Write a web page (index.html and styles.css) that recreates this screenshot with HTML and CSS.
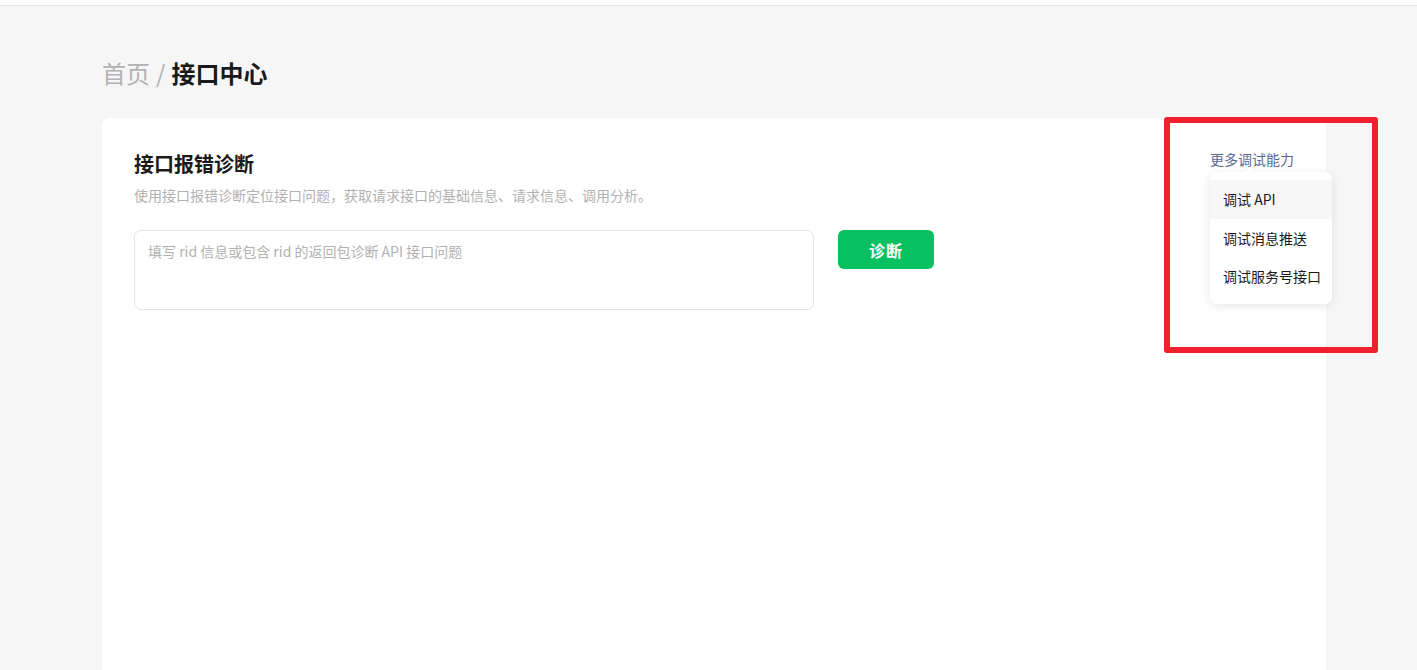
FILE: index.html
```html
<!DOCTYPE html>
<html lang="zh-CN">
<head>
<meta charset="utf-8">
<title>接口中心</title>
<link rel="stylesheet" href="styles.css">
</head>
<body>
<header class="topbar"></header>
<main class="page">
  <nav class="crumbs"><span class="crumb-home">首页</span><span class="crumb-sep">/</span><span class="crumb-current">接口中心</span></nav>
  <section class="card">
    <div class="card-main">
      <h1 class="card-title">接口报错诊断</h1>
      <p class="card-desc">使用接口报错诊断定位接口问题，获取请求接口的基础信息、请求信息、调用分析。</p>
      <div class="diag-row">
        <textarea class="diag-input" placeholder="填写 rid 信息或包含 rid 的返回包诊断 API 接口问题"></textarea>
        <button class="diag-btn" type="button">诊断</button>
      </div>
    </div>
    <aside class="card-side">
      <div class="more">
        <a class="more-link">更多调试能力</a>
        <div class="menu">
          <span class="menu-arrow"></span>
          <div class="menu-item is-hover">调试 API</div>
          <div class="menu-item">调试消息推送</div>
          <div class="menu-item">调试服务号接口</div>
        </div>
      </div>
    </aside>
  </section>
</main>
<div class="annotation"></div>
</body>
</html>
```

FILE: styles.css
```css
* { box-sizing: border-box; }
html, body {
  margin: 0;
  padding: 0;
  height: 100%;
}
body {
  background: #f6f6f6;
  font-family: "Noto Sans CJK SC", "PingFang SC", sans-serif;
  color: #1a1a1a;
  overflow: hidden;
  position: relative;
}
.topbar {
  height: 6px;
  background: #fff;
  border-bottom: 1px solid #e6e6e6;
}
.page {
  width: 1224px;
  margin-left: 102px;
}
.crumbs {
  margin-top: 51px;
  height: 32px;
  line-height: 32px;
  font-size: 24px;
  display: flex;
  align-items: center;
  gap: 6px;
}
.crumb-home, .crumb-sep { color: #b2b2b2; }
.crumb-current { font-weight: 700; color: #1a1a1a; }
.card {
  margin-top: 29px;
  background: #fff;
  border-radius: 8px 8px 0 0;
  height: 560px;
  display: flex;
}
.card-main {
  flex: 1;
  padding: 32px 0 0 32px;
}
.card-title {
  margin: 0;
  font-size: 20px;
  line-height: 28px;
  font-weight: 700;
  color: #1a1a1a;
}
.card-desc {
  margin: 6px 0 0;
  font-size: 14px;
  line-height: 22px;
  color: #b2b2b2;
}
.diag-row {
  margin-top: 24px;
  display: flex;
  align-items: flex-start;
  gap: 24px;
}
.diag-input {
  width: 680px;
  height: 80px;
  border: 1px solid #e3e3e3;
  border-radius: 7px;
  padding: 10px 13px;
  font-family: inherit;
  font-size: 14px;
  line-height: 20px;
  resize: none;
  outline: none;
  color: #1a1a1a;
  background: #fff;
}
.diag-input::placeholder { color: #b2b2b2; }
.diag-btn {
  width: 96px;
  height: 39px;
  border: none;
  border-radius: 6px;
  background: #07c160;
  color: #fff;
  font-family: inherit;
  font-size: 16px;
  font-weight: 700;
  letter-spacing: 1px;
  cursor: pointer;
}
.card-side {
  width: 116px;
  padding-top: 31px;
}
.more { position: relative; }
.more-link {
  display: block;
  font-size: 14px;
  line-height: 20px;
  color: #576b95;
  cursor: pointer;
}
.menu {
  position: absolute;
  top: 23px;
  left: 0;
  width: 122px;
  padding: 8px 0;
  background: #fff;
  border-radius: 7px;
  box-shadow: 0 2px 10px rgba(0, 0, 0, 0.1);
  z-index: 2;
}
.menu-arrow {
  position: absolute;
  top: -4px;
  left: 36px;
  width: 8px;
  height: 8px;
  background: #fff;
  transform: rotate(45deg);
  box-shadow: -1px -1px 2px rgba(0, 0, 0, 0.04);
}
.menu-item {
  position: relative;
  height: 38.5px;
  line-height: 38.5px;
  padding-left: 13px;
  font-size: 14px;
  color: #1a1a1a;
  white-space: nowrap;
}
.menu-item.is-hover { background: #f7f7f7; }
.annotation {
  position: absolute;
  left: 1164px;
  top: 117px;
  width: 214px;
  height: 236px;
  border: 6px solid #f0202d;
  border-radius: 3px;
  pointer-events: none;
  z-index: 5;
}
```
